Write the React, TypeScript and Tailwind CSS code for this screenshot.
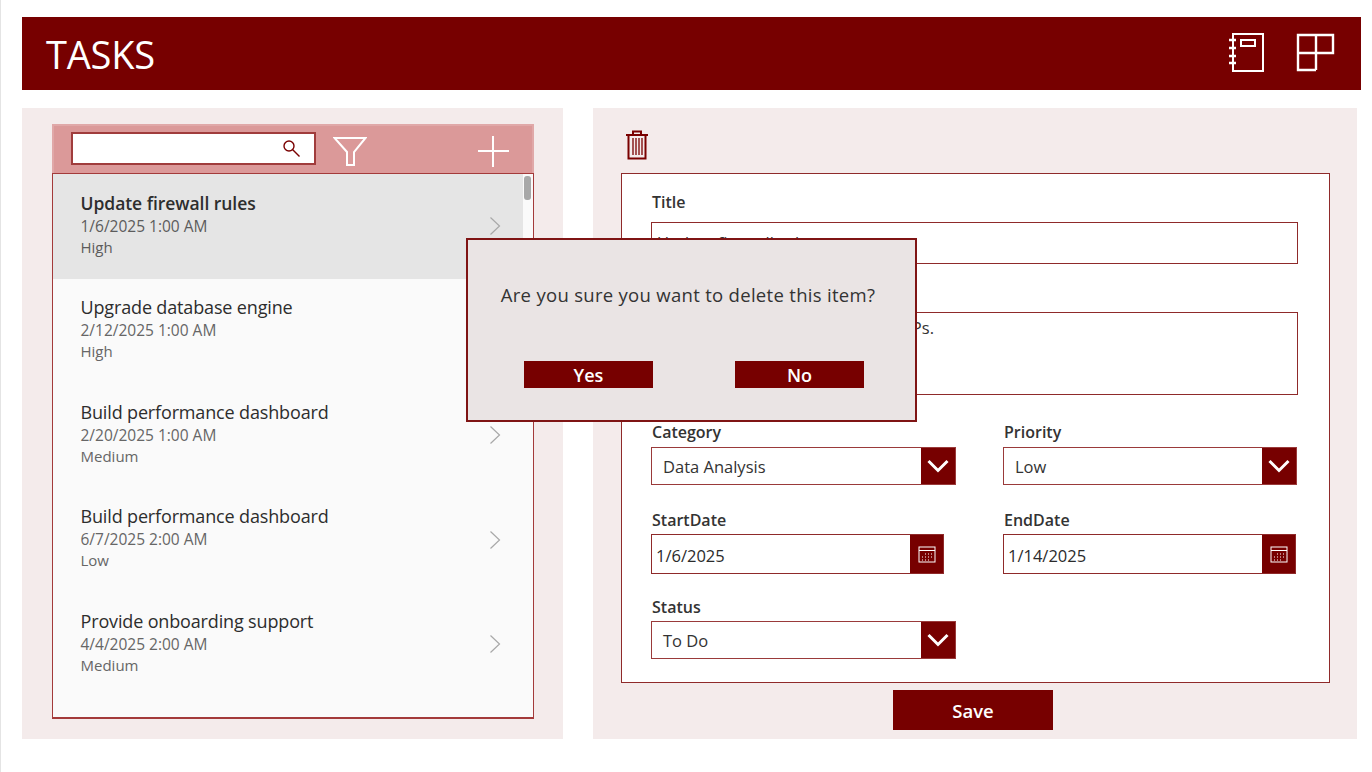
const FONT = "font-['Open_Sans','Noto_Sans',sans-serif]";

type Task = { title: string; date: string; priority: string; selected?: boolean };

const tasks: Task[] = [
  { title: 'Update firewall rules', date: '1/6/2025 1:00 AM', priority: 'High', selected: true },
  { title: 'Upgrade database engine', date: '2/12/2025 1:00 AM', priority: 'High' },
  { title: 'Build performance dashboard', date: '2/20/2025 1:00 AM', priority: 'Medium' },
  { title: 'Build performance dashboard', date: '6/7/2025 2:00 AM', priority: 'Low' },
  { title: 'Provide onboarding support', date: '4/4/2025 2:00 AM', priority: 'Medium' },
];

const NotebookIcon = () => (
  <svg width="37" height="41" viewBox="0 0 37 41" fill="none" stroke="white" strokeWidth="2">
    <rect x="5" y="2" width="30" height="37" />
    <rect x="13" y="8" width="14" height="6" />
    <path d="M1 8h7M1 16h7M1 24h7M1 31h7" strokeWidth="2.5" />
  </svg>
);

const LayoutIcon = () => (
  <svg width="39" height="39" viewBox="0 0 39 39" fill="none" stroke="white" strokeWidth="2.4">
    <path d="M2 2h35v18H2zM20 2v35M2 20v17h18" />
  </svg>
);

const SearchIcon = () => (
  <svg width="19" height="19" viewBox="0 0 19 19" fill="none" stroke="#7a0000" strokeWidth="1.4">
    <circle cx="7" cy="7" r="5" />
    <path d="M10.5 10.5l7 7" />
  </svg>
);

const FilterIcon = () => (
  <svg width="34" height="31" viewBox="0 0 34 31" fill="none" stroke="white" strokeWidth="2">
    <path d="M1.5 2h31L21 16v13h-7V16z" />
  </svg>
);

const PlusIcon = () => (
  <svg width="32" height="32" viewBox="0 0 32 32" stroke="white" strokeWidth="2">
    <path d="M16 1v31M1 16h31" />
  </svg>
);

const TrashIcon = () => (
  <svg width="22" height="30" viewBox="0 0 22 30" fill="none" stroke="#7a0000">
    <path d="M0 5h22M7 4V1.5h8V4" strokeWidth="2" />
    <path d="M2.5 5v23.5h17V5" strokeWidth="2" />
    <path d="M7 8v17M10 8v17M13 8v17M16 8v17" strokeWidth="1.3" />
  </svg>
);

const Chevron = () => (
  <svg width="12" height="20" viewBox="0 0 12 20" fill="none" stroke="#a8a8a8" strokeWidth="1.2">
    <path d="M1.5 1.5l9 8.5-9 8.5" />
  </svg>
);

const DownIcon = () => (
  <svg width="22" height="14" viewBox="0 0 22 14" fill="none" stroke="white" strokeWidth="3">
    <path d="M1.5 2l9.5 9.5L20.5 2" />
  </svg>
);

const CalendarIcon = () => (
  <svg width="18" height="17" viewBox="0 0 18 17" fill="none" stroke="white" strokeWidth="1">
    <rect x="1" y="1" width="16" height="15" />
    <path d="M1 4.5h16" />
    <path d="M7 8h1M10 8h1M13 8h1M4 11h1M7 11h1M10 11h1M13 11h1M4 14h1M7 14h1M10 14h1" strokeWidth="1.2" />
  </svg>
);

const TaskRow = ({ task }: { task: Task }) => (
  <div className={`h-[104.5px] shrink-0 flex items-center pl-[27.5px] pr-[32px] ${task.selected ? 'bg-[#e5e5e5]' : ''}`}>
    <div className="flex-1 pb-[4px]">
      {task.selected ? (
        <div className="text-[17.5px] leading-6 tracking-[-0.05px] font-semibold text-[#2d2d2d]">{task.title}</div>
      ) : (
        <div className="text-[18px] leading-6 tracking-[-0.15px] text-[#2d2d2d]">{task.title}</div>
      )}
      <div className={`text-[15.5px] leading-[22px] ${task.selected ? 'font-medium text-[#5c5c5c]' : 'text-[#666666]'}`}>
        {task.date}
      </div>
      <div className={`text-[15px] leading-[21px] ${task.selected ? 'font-medium text-[#5c5c5c]' : 'text-[#666666]'}`}>
        {task.priority}
      </div>
    </div>
    <Chevron />
  </div>
);

const Label = ({ children }: { children: string }) => (
  <div className="pl-px text-[16px] leading-5 font-semibold text-[#333333]">{children}</div>
);

const Select = ({ value, width, gap = 'mt-[5px]' }: { value: string; width: string; gap?: string }) => (
  <div className={`${width} h-[38px] ${gap} flex border border-[#9a3a3a] bg-white`}>
    <div className="flex-1 pl-[11px] text-[16.5px] leading-[38px] text-[#333333]">{value}</div>
    <div className="w-[34px] bg-[#770000] flex items-center justify-center">
      <DownIcon />
    </div>
  </div>
);

const DateInput = ({ value, width }: { value: string; width: string }) => (
  <div className={`${width} h-10 mt-[4px] flex border border-[#8f2a2a] bg-white`}>
    <div className="flex-1 pl-[4px] text-[16.5px] leading-[42px] text-[#2b2b2b]">{value}</div>
    <div className="w-[33px] bg-[#770000] flex items-center justify-center">
      <CalendarIcon />
    </div>
  </div>
);

export default function App() {
  return (
    <div className={`${FONT} relative w-[1372px] h-[772px] overflow-hidden bg-white border-l border-[#e4e4e4] pt-[17px] pl-[21px]`}>
      <header className="w-[1339px] h-[73px] bg-[#770000] flex items-center pl-6 pr-[26px]">
        <h1 className="flex-1 text-[38px] leading-none tracking-[-0.2px] text-white">TASKS</h1>
        <div className="flex items-center gap-[31px] pb-[2px]">
          <NotebookIcon />
          <LayoutIcon />
        </div>
      </header>

      <div className="flex mt-[18px] gap-[30px]">
        <section className="w-[541px] h-[631px] bg-[#f4ebeb] pt-4 pl-[30px]">
          <div className="w-[482px] h-[49px] bg-[#db9999] border-2 border-b-0 border-[#e0a8a8] flex items-center pl-[17px]">
            <div className="w-[245px] h-[33px] mb-[2px] bg-white border-2 border-[#a03c3c] flex items-center justify-end pr-[13px]">
              <SearchIcon />
            </div>
            <div className="ml-[17px] mt-[3px]"><FilterIcon /></div>
            <div className="ml-[110px] mt-[3px]"><PlusIcon /></div>
          </div>
          <div className="relative w-[482px] h-[546px] bg-[#fafafa] border border-[#a33a3a] border-b-2 overflow-hidden">
            {tasks.map((t, i) => (
              <TaskRow key={i} task={t} />
            ))}
            <div className="absolute right-0 top-0 bottom-0 w-[10px] bg-[#fafafa]">
              <div className="w-[7px] h-6 ml-[1px] mt-[2px] rounded-[3px] bg-[#a8a8a8]" />
            </div>
          </div>
        </section>

        <section className="w-[764px] h-[631px] bg-[#f4ebeb] pl-7">
          <div className="h-[65px] pt-[22px] pl-[5px]">
            <TrashIcon />
          </div>
          <div className="w-[709px] h-[510px] bg-white border border-[#8f2a2a] pt-[18px] pl-[29px]">
            <Label>Title</Label>
            <div className="w-[647px] h-[42px] mt-[10px] border border-[#8f2a2a] pl-[5px] pt-[8px] text-[16.5px] leading-6 text-[#333333]">
              Update firewall rules
            </div>
            <div className="mt-[27px]"><Label>Description</Label></div>
            <div className="w-[647px] h-[83px] mt-[1px] border border-[#8f2a2a] pl-[5px] pt-[3px] text-[16.5px] leading-6 tracking-[0.1px] text-[#333333]">
              Review and update rules for all VPs.
            </div>
            <div className="grid grid-cols-[352px_1fr] mt-[27px]">
              <div>
                <Label>Category</Label>
                <Select value="Data Analysis" width="w-[305px]" />
              </div>
              <div>
                <Label>Priority</Label>
                <Select value="Low" width="w-[294px]" />
              </div>
              <div className="mt-[25px]">
                <Label>StartDate</Label>
                <DateInput value="1/6/2025" width="w-[293px]" />
              </div>
              <div className="mt-[25px]">
                <Label>EndDate</Label>
                <DateInput value="1/14/2025" width="w-[293px]" />
              </div>
              <div className="mt-[23px]">
                <Label>Status</Label>
                <Select value="To Do" width="w-[305px]" gap="mt-[4px]" />
              </div>
            </div>
          </div>
          <button className="block w-[160px] h-10 mt-[7px] ml-[272px] pt-px bg-[#770000] text-[18.5px] font-semibold text-white">
            Save
          </button>
        </section>
      </div>

      <div className="absolute left-[465px] top-[238px] w-[451px] h-[184px] bg-[#eae4e4] border-2 border-[#7f1414]">
        <p className="mt-[43px] pr-[7px] text-center text-[18.5px] leading-6 text-[#333333] tracking-[0.3px]">
          Are you sure you want to delete this item?
        </p>
        <div className="flex mt-[54px] pl-[56px] gap-[82px]">
          <button className="w-[129px] h-[27px] bg-[#770000] text-[18px] font-semibold leading-[29px] text-white">Yes</button>
          <button className="w-[129px] h-[27px] bg-[#770000] text-[18px] font-semibold leading-[29px] text-white">No</button>
        </div>
      </div>
    </div>
  );
}
